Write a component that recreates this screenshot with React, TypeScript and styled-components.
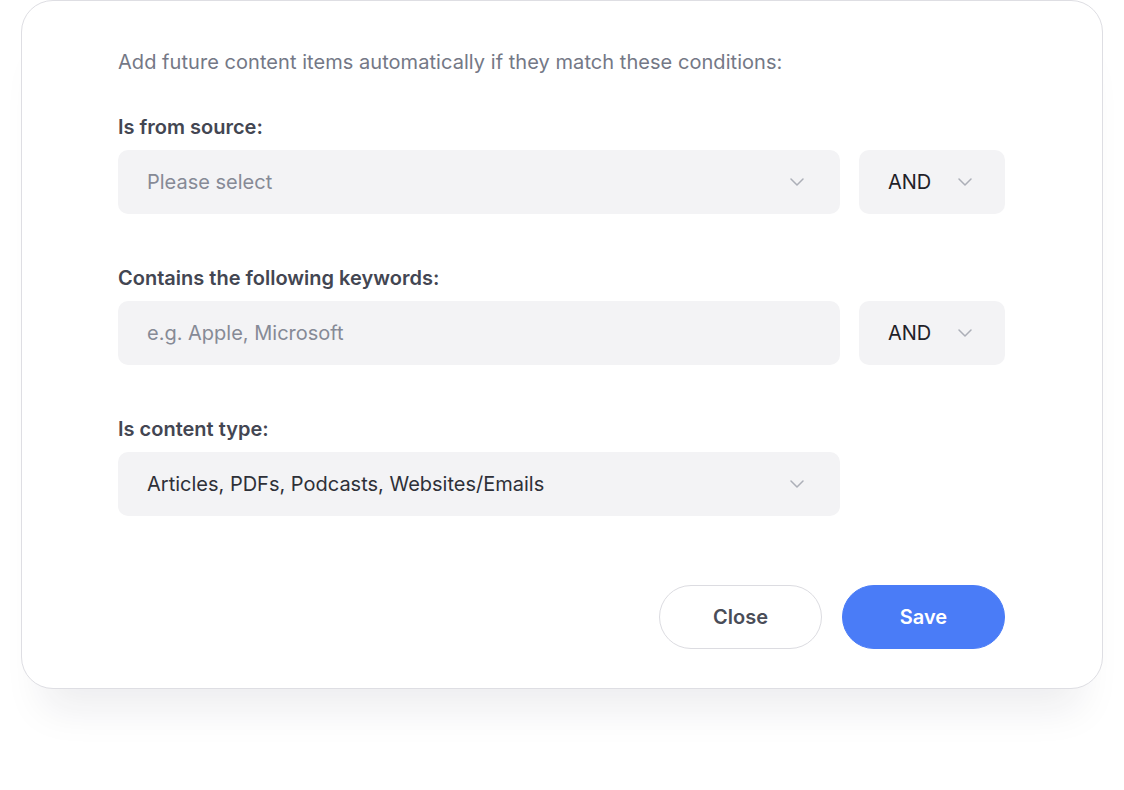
import React from 'react';
import styled, { createGlobalStyle } from 'styled-components';

const GlobalStyle = createGlobalStyle`
  html, body {
    margin: 0;
    padding: 0;
    background: #ffffff;
    font-family: Inter, "Noto Sans", "Liberation Sans", sans-serif;
  }
`;

const Page = styled.div`
  width: 1124px;
  height: 790px;
  padding: 0 21px;
  box-sizing: border-box;
  overflow: hidden;
`;

const Card = styled.div`
  box-sizing: border-box;
  width: 1082px;
  height: 689px;
  padding: 49px 97px 40px 96px;
  background: #fff;
  border: 1.5px solid #dedee3;
  border-radius: 32px;
  box-shadow: 0 42px 40px -22px rgba(30, 30, 50, 0.08);
  display: flex;
  flex-direction: column;
`;

const Intro = styled.p`
  margin: 0 0 41px;
  font-size: 20px;
  line-height: 24px;
  letter-spacing: 0.05px;
  color: #747886;
`;

const Fields = styled.div`
  display: flex;
  flex-direction: column;
  gap: 52px;
`;

const Group = styled.div`
  display: flex;
  flex-direction: column;
`;

const Label = styled.label`
  font-size: 20px;
  line-height: 24px;
  font-weight: 600;
  color: #434652;
  margin-bottom: 11px;
`;

const Row = styled.div`
  display: flex;
  gap: 19px;
`;

const Select = styled.div<{ $width: number; $padRight: number }>`
  box-sizing: border-box;
  width: ${(p) => p.$width}px;
  height: 64px;
  padding: 0 ${(p) => p.$padRight}px 0 29px;
  border-radius: 10px;
  background: #f3f3f5;
  display: flex;
  align-items: center;
  justify-content: space-between;
  cursor: pointer;
`;

const Value = styled.span<{ $placeholder?: boolean; $dark?: boolean }>`
  font-size: 20px;
  color: ${(p) => (p.$placeholder ? '#868a96' : p.$dark ? '#1f2128' : '#2e3038')};
`;

const Actions = styled.div`
  margin-top: 69px;
  display: flex;
  justify-content: flex-end;
  gap: 20px;
`;

const Button = styled.button<{ $primary?: boolean }>`
  width: 163px;
  height: 64px;
  border-radius: 32px;
  font-family: inherit;
  font-size: 20px;
  font-weight: 600;
  cursor: pointer;
  border: 1.5px solid ${(p) => (p.$primary ? '#4a7cf7' : '#dcdce1')};
  background: ${(p) => (p.$primary ? '#4a7cf7' : '#fff')};
  color: ${(p) => (p.$primary ? '#fff' : '#4a4d58')};
`;

const Chevron = () => (
  <svg width="14" height="8" viewBox="0 0 14 8" fill="none">
    <path d="M1 1l6 6 6-6" stroke="#acafb8" strokeWidth="1.5" strokeLinecap="round" strokeLinejoin="round" />
  </svg>
);

const App: React.FC = () => {
  return (
    <>
      <GlobalStyle />
      <Page>
        <Card>
          <Intro>Add future content items automatically if they match these conditions:</Intro>

          <Fields>
            <Group>
              <Label>Is from source:</Label>
              <Row>
                <Select $width={722} $padRight={36}>
                  <Value $placeholder>Please select</Value>
                  <Chevron />
                </Select>
                <Select $width={146} $padRight={33}>
                  <Value $dark>AND</Value>
                  <Chevron />
                </Select>
              </Row>
            </Group>

            <Group>
              <Label>Contains the following keywords:</Label>
              <Row>
                <Select $width={722} $padRight={36}>
                  <Value $placeholder>e.g. Apple, Microsoft</Value>
                </Select>
                <Select $width={146} $padRight={33}>
                  <Value $dark>AND</Value>
                  <Chevron />
                </Select>
              </Row>
            </Group>

            <Group>
              <Label>Is content type:</Label>
              <Row>
                <Select $width={722} $padRight={36}>
                  <Value>Articles, PDFs, Podcasts, Websites/Emails</Value>
                  <Chevron />
                </Select>
              </Row>
            </Group>
          </Fields>

          <Actions>
            <Button>Close</Button>
            <Button $primary>Save</Button>
          </Actions>
        </Card>
      </Page>
    </>
  );
};

export default App;
